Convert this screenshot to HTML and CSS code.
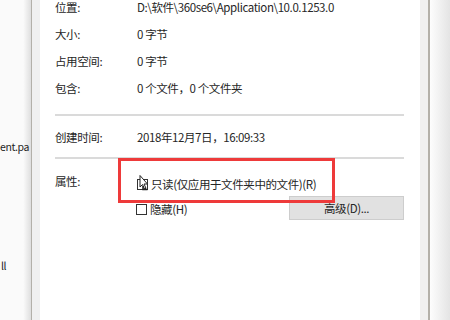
FILE: index.html
```html
<!DOCTYPE html>
<html lang="zh-CN">
<head>
    <meta charset="UTF-8">
    <title>属性</title>
    <link rel="stylesheet" href="styles.css">
</head>
<body>

    <!-- Explorer window behind the dialog -->
    <div class="explorer">
        <div class="file-name first">ent.pa</div>
        <div class="file-name second">ll</div>
    </div>

    <!-- Properties dialog, general tab -->
    <div class="dialog">
        <div class="panel">
            <div class="info">
                <div class="row"><span class="label">位置:</span><span class="value">D:\软件\360se6\Application\10.0.1253.0</span></div>
                <div class="row"><span class="label">大小:</span><span class="value">0 字节</span></div>
                <div class="row"><span class="label">占用空间:</span><span class="value">0 字节</span></div>
                <div class="row"><span class="label">包含:</span><span class="value">0 个文件，0 个文件夹</span></div>
            </div>

            <div class="separator"></div>

            <div class="row created"><span class="label">创建时间:</span><span class="value">2018年12月7日，16:09:33</span></div>

            <div class="separator second"></div>

            <div class="attributes">
                <span class="label">属性:</span>
                <div class="options">
                    <div class="option">
                        <svg class="cursor-box" width="14" height="18" viewBox="0 0 14 18">
                            <rect x="1.5" y="4.5" width="10" height="10" fill="#fff" stroke="#333"/>
                            <path d="M4 0.5 V12 L6.5 9.5 L8.5 14 L10 13.3 L8 9 H11.5 Z" fill="#fff" stroke="#222"/>
                            <path d="M7 11 V14.5 H11.5" fill="none" stroke="#222" stroke-width="1.5"/>
                        </svg>
                        <span>只读(仅应用于文件夹中的文件)(R)</span>
                    </div>
                    <div class="option hidden-row">
                        <span class="checkbox"></span>
                        <span class="option-text">隐藏(H)</span>
                        <button class="advanced">高级(D)...</button>
                    </div>
                </div>
            </div>
        </div>
    </div>

    <div class="backdrop"></div>

    <!-- annotation drawn over the screenshot -->
    <div class="highlight"></div>

</body>
</html>
```

FILE: styles.css
```css
body {
    font-family: "Noto Sans CJK SC", "Noto Sans", sans-serif;
    font-size: 11.5px;
    letter-spacing: -0.4px;
    color: #262626;
    margin: 0;
    padding: 0;
    display: flex;
    width: 450px;
    height: 320px;
    overflow: hidden;
    background-color: #fff;
}
.explorer {
    width: 31px;
    flex-shrink: 0;
    background: linear-gradient(to right, #fafafa 75%, #dedede);
    overflow: hidden;
}
.file-name {
    line-height: 16px;
    white-space: nowrap;
    color: #1e1e1e;
    font-size: 10.5px;
}
.file-name.first {
    margin-top: 139px;
}
.file-name.second {
    margin-top: 103px;
    padding-left: 1px;
}
.dialog {
    width: 380px;
    flex-shrink: 0;
    background-color: #f0f0f0;
    border-left: 1px solid #b3b0a9;
    border-right: 2px solid #b3b0a9;
    padding: 0 8px;
}
.panel {
    background-color: #fff;
    height: 320px;
    padding: 0 16px 0 15px;
}
.backdrop {
    flex: 1;
    background: linear-gradient(to right, #fdfdfd, #e4e4e4);
}
.info {
    display: flex;
    flex-direction: column;
    gap: 13px;
}
.row {
    display: flex;
    line-height: 14px;
    white-space: nowrap;
}
.label {
    width: 82px;
    flex-shrink: 0;
}
.separator {
    height: 2px;
    background-color: #dadada;
    margin-top: 19px;
}
.row.created {
    margin-top: 13px;
    line-height: 16px;
}
.separator.second {
    margin-top: 12px;
}
.attributes {
    display: flex;
    margin-top: 16px;
    line-height: 16px;
}
.attributes .label {
    width: 81px;
    margin-top: -2px;
}
.options {
    flex: 1;
}
.option {
    display: flex;
    align-items: center;
    white-space: nowrap;
}
.cursor-box {
    margin-right: 1px;
}
.hidden-row {
    margin-top: 3px;
    height: 24px;
}
.checkbox {
    width: 11px;
    height: 11px;
    box-sizing: border-box;
    border: 1px solid #333;
    margin: 2px 3px 0 0;
}
.option-text {
    padding-top: 1px;
}
.advanced {
    margin-left: auto;
    width: 115px;
    height: 24px;
    background-color: #e1e1e1;
    border: 1px solid #cdcdcd;
    font-family: inherit;
    font-size: 11.5px;
    letter-spacing: -0.4px;
    color: #262626;
    padding: 0;
}
.highlight {
    position: absolute;
    left: 118px;
    top: 158px;
    width: 217px;
    height: 45px;
    box-sizing: border-box;
    border: 3px solid #ee3a3a;
}
```
